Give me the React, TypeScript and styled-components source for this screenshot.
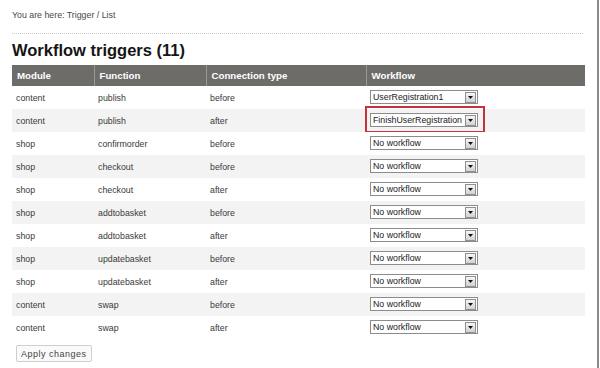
import * as React from 'react'
import styled, { createGlobalStyle } from 'styled-components'

interface Trigger {
  module: string
  fn: string
  connection: string
  workflow: string
  highlight?: boolean
}

const triggers: Trigger[] = [
  { module: 'content', fn: 'publish', connection: 'before', workflow: 'UserRegistration1' },
  { module: 'content', fn: 'publish', connection: 'after', workflow: 'FinishUserRegistration', highlight: true },
  { module: 'shop', fn: 'confirmorder', connection: 'before', workflow: 'No workflow' },
  { module: 'shop', fn: 'checkout', connection: 'before', workflow: 'No workflow' },
  { module: 'shop', fn: 'checkout', connection: 'after', workflow: 'No workflow' },
  { module: 'shop', fn: 'addtobasket', connection: 'before', workflow: 'No workflow' },
  { module: 'shop', fn: 'addtobasket', connection: 'after', workflow: 'No workflow' },
  { module: 'shop', fn: 'updatebasket', connection: 'before', workflow: 'No workflow' },
  { module: 'shop', fn: 'updatebasket', connection: 'after', workflow: 'No workflow' },
  { module: 'content', fn: 'swap', connection: 'before', workflow: 'No workflow' },
  { module: 'content', fn: 'swap', connection: 'after', workflow: 'No workflow' },
]

export default function App() {
  return (
    <>
      <GlobalStyle />
      <Page>
        <Breadcrumb>You are here: Trigger / List</Breadcrumb>
        <Divider />
        <Title>Workflow triggers (11)</Title>
        <Table>
          <colgroup>
            <col style={{ width: 82 }} />
            <col style={{ width: 112 }} />
            <col style={{ width: 160 }} />
            <col style={{ width: 219 }} />
          </colgroup>
          <thead>
            <tr>
              <Th>Module</Th>
              <Th>Function</Th>
              <Th>Connection type</Th>
              <Th>Workflow</Th>
            </tr>
          </thead>
          <tbody>
            {triggers.map((t, i) => (
              <Row key={i} $shaded={i % 2 === 1}>
                <Td>{t.module}</Td>
                <Td>{t.fn}</Td>
                <Td>{t.connection}</Td>
                <SelectCell>
                  <Highlight $on={!!t.highlight}>
                    <Select>
                      <SelectValue>{t.workflow}</SelectValue>
                      <Arrow>
                        <svg width="5" height="3" viewBox="0 0 5 3">
                          <path d="M0 0h5L2.5 3z" fill="#111" />
                        </svg>
                      </Arrow>
                    </Select>
                  </Highlight>
                </SelectCell>
              </Row>
            ))}
          </tbody>
        </Table>
        <ApplyButton>Apply changes</ApplyButton>
      </Page>
    </>
  )
}

const GlobalStyle = createGlobalStyle`
  html, body {
    margin: 0;
    padding: 0;
    background: #fff;
  }
  body {
    font-family: "Liberation Sans", Arial, sans-serif;
    font-size: 9px;
    color: #333;
  }
`

const Page = styled.div`
  box-sizing: border-box;
  width: 599px;
  height: 368px;
  padding: 9px 14px 0 12px;
  border-right: 2px solid #8a8a8a;
  overflow: hidden;
`

const Breadcrumb = styled.div`
  font-size: 8.8px;
  color: #484848;
  line-height: 13px;
`

const Divider = styled.div`
  margin-top: 11px;
  border-top: 1px dotted #c8c8c8;
`

const Title = styled.h1`
  margin: 5px 0 0;
  font-size: 16.5px;
  font-weight: bold;
  color: #151515;
  line-height: 23px;
`

const Table = styled.table`
  margin-top: 3px;
  width: 573px;
  border-collapse: collapse;
  table-layout: fixed;
`

const Th = styled.th`
  height: 21px;
  padding: 0 5px;
  background: #6e6c69;
  color: #fff;
  font-size: 9.7px;
  font-weight: bold;
  text-align: left;
  border-left: 1px solid #9a9895;
  &:first-child {
    border-left: none;
  }
`

const Row = styled.tr<{ $shaded: boolean }>`
  background: ${(p) => (p.$shaded ? '#f3f3f3' : '#fff')};
`

const Td = styled.td`
  height: 23px;
  padding: 0 4px;
  color: #3a3a3a;
  font-size: 8.8px;
  vertical-align: middle;
`

const SelectCell = styled.td`
  height: 23px;
  padding: 0;
  vertical-align: middle;
`

const Highlight = styled.div<{ $on: boolean }>`
  display: flex;
  box-sizing: border-box;
  width: 120px;
  height: 27px;
  margin: -3px 0 -1px -1px;
  align-items: center;
  padding: 1px 0 0 3px;
  border: 2px solid ${(p) => (p.$on ? '#c4323c' : 'transparent')};
`

const Select = styled.div`
  display: flex;
  box-sizing: border-box;
  width: 108px;
  height: 14px;
  align-items: center;
  border: 1px solid #8c8c8c;
  background: #fff;
`

const SelectValue = styled.span`
  flex: 1;
  padding-left: 2px;
  overflow: hidden;
  white-space: nowrap;
  font-size: 8.8px;
  color: #222;
  line-height: 12px;
`

const Arrow = styled.span`
  display: flex;
  flex: none;
  box-sizing: border-box;
  width: 11px;
  height: 11px;
  margin: 0 1px;
  align-items: center;
  justify-content: center;
  border: 1px solid #8f8f8f;
  background: linear-gradient(#f6f6f6, #d2d2d2);
`

const ApplyButton = styled.button`
  display: block;
  margin: 6px 0 0 4px;
  height: 17px;
  padding: 0 4px;
  border: 1px solid #cfcfcf;
  border-radius: 2px;
  background: #fafafa;
  color: #444;
  font-family: "Liberation Sans", Arial, sans-serif;
  font-size: 9px;
  letter-spacing: 0.5px;
`
